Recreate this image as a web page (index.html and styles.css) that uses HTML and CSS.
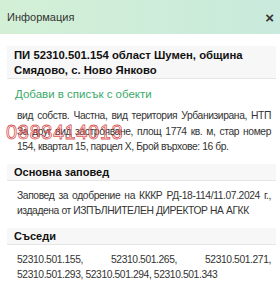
FILE: index.html
```html
<!DOCTYPE html>
<html lang="bg">
<head>
  <meta charset="UTF-8">
  <title>Информация</title>
  <link rel="stylesheet" href="styles.css">
</head>
<body>
  <div class="popup">
    <div class="popup-header">
      <span class="popup-title">Информация</span>
      <span class="popup-close">&times;</span>
    </div>

    <div class="popup-body">
      <div class="parcel-title">ПИ 52310.501.154 област Шумен, община<br>Смядово, с. Ново Янково</div>

      <a class="add-link" href="#">Добави в списък с обекти</a>

      <p class="text">
        <span class="line">вид собств. Частна, вид територия Урбанизирана, НТП</span>
        <span class="line">За друг вид застрояване, площ 1774 кв. м, стар номер</span>
        <span class="line last">154, квартал 15, парцел X, Брой върхове: 16 бр.</span>
      </p>

      <div class="section-title">Основна заповед</div>
      <p class="text">
        <span class="line">Заповед за одобрение на КККР РД-18-114/11.07.2024&nbsp;г.,</span>
        <span class="line last">издадена от ИЗПЪЛНИТЕЛЕН ДИРЕКТОР НА АГКК</span>
      </p>

      <div class="section-title">Съседи</div>
      <p class="text">
        <span class="line">52310.501.155, 52310.501.265, 52310.501.271,</span>
        <span class="line last">52310.501.293, 52310.501.294, 52310.501.343</span>
      </p>

      <!-- watermark over the text -->
      <div class="watermark">0883414013</div>
    </div>
  </div>
</body>
</html>
```

FILE: styles.css
```css
body, html {
  margin: 0;
  padding: 0;
  background: #ffffff;
  font-family: "Liberation Sans", Arial, sans-serif;
  color: #222;
}

.popup {
  width: 280px;
  height: 287px;
  overflow: hidden;
}

.popup-header {
  height: 34px;
  display: flex;
  align-items: center;
  justify-content: space-between;
  padding: 0 6px 0 7px;
  background: linear-gradient(to right, #d3f0d6, #c9eadc);
  font-size: 11px;
  color: #333;
}

.popup-close {
  font-size: 15px;
  font-weight: bold;
  color: #333;
}

.popup-body {
  position: relative;
  padding: 12px 4px 0 7px;
}

.parcel-title {
  background: #f7f7f7;
  border-bottom: 1px solid #e6e6e6;
  padding: 2px 7px 1px 7px;
  font-size: 11.3px;
  font-weight: bold;
  line-height: 14.5px;
  color: #111;
}

.add-link {
  display: block;
  margin: 8px 0 0 8px;
  font-size: 11.5px;
  line-height: 14px;
  color: #3aaa6a;
  text-decoration: none;
}

.text {
  margin: 7px 5px 9px 10px;
  font-size: 10.3px;
  letter-spacing: -0.4px;
  line-height: 15.5px;
  color: #333;
}

.line {
  display: block;
  text-align: justify;
  text-align-last: justify;
}

.line.last {
  text-align-last: left;
}

.section-title {
  background: #f7f7f7;
  border-bottom: 1px solid #e6e6e6;
  padding: 1px 7px 0 7px;
  font-size: 11px;
  font-weight: bold;
  line-height: 15px;
  color: #111;
}

.watermark {
  position: absolute;
  left: 6px;
  top: 87px;
  font-size: 20px;
  letter-spacing: 0.6px;
  color: rgba(255, 220, 220, 0.35);
  -webkit-text-stroke: 0.8px rgba(210, 60, 60, 0.85);
  pointer-events: none;
}
```
